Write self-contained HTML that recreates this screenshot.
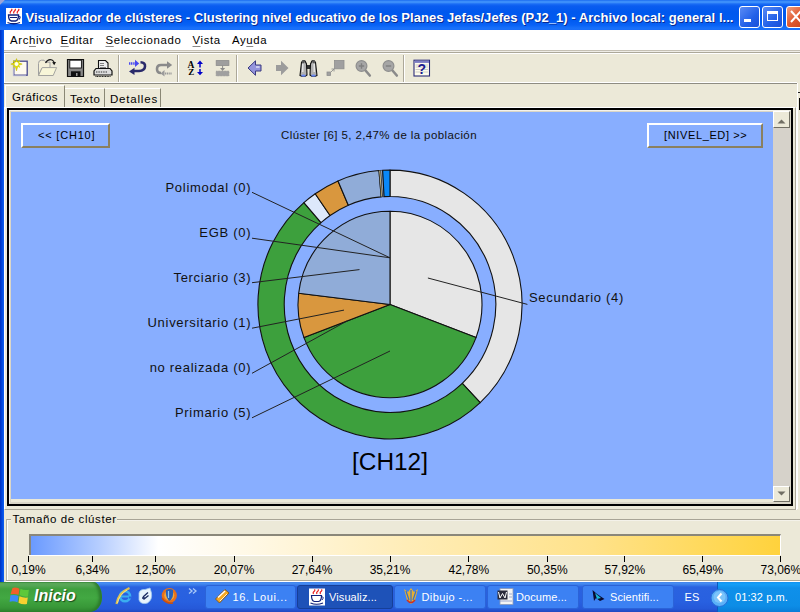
<!DOCTYPE html>
<html><head><meta charset="utf-8"><style>
*{margin:0;padding:0;box-sizing:border-box}
body{width:800px;height:612px;overflow:hidden;position:relative;background:#ECE9D8;font-family:"Liberation Sans",sans-serif;color:#000}
.a{position:absolute}
.t{position:absolute;white-space:nowrap;line-height:1}
#title{left:0;top:0;width:800px;height:30px;background:linear-gradient(#1060EC 0px,#3C8EFA 1px,#3C8EFA 2.5px,#1A6CF5 4px,#0A5CF0 6px,#0058EE 12px,#005AF0 20px,#0862F6 25px,#1870FA 28px,#1A6EF8 30px)}
#tl{left:0;top:0;width:6px;height:6px;background:linear-gradient(135deg,#9AA4D8 0,#9AA4D8 35%,transparent 45%)}
#lb{left:0;top:30px;width:4px;height:552px;background:linear-gradient(90deg,#0030C0,#0048E0 50%,#1060F0)}
#menu{left:4px;top:30px;width:796px;height:20px;background:#fff}
.mi{font-size:11.4px;top:35px;letter-spacing:0.62px}
.u{text-decoration:underline;text-decoration-color:#888;text-underline-offset:2px}
#sep1{left:4px;top:50px;width:796px;height:4px;background:linear-gradient(#C5C0B4 0,#C5C0B4 1px,#EFEDE6 1px,#EFEDE6 2px,#ACA899 2px,#ACA899 3px,#fff 3px)}
#tb{left:4px;top:54px;width:793px;height:29px;background:#ECE9D8;border-left:1px solid #fff}
#tbb{left:4px;top:82px;width:793px;height:2px;background:linear-gradient(#fff 0,#fff 1px,#8E8C82 1px)}
.vs{top:55px;width:2px;height:27px;background:linear-gradient(90deg,#ACA899 0,#ACA899 1px,#fff 1px)}
.tab{top:86px;height:22px;background:#ECE9D8;border-top:1px solid #fff;border-left:1px solid #fff;border-right:1px solid #8A8775}
.tabt{font-size:11.5px;letter-spacing:0.4px}
#panel{left:4px;top:107px;width:792px;height:403px}
#blk{left:7px;top:108px;width:786px;height:398px;border:2px solid #000}
#chart{left:11px;top:112px;width:762px;height:387px;background:#88AEFF}
#sb{left:773px;top:111px;width:17px;height:391px;background:#D6D2CA}
.sbtn{left:773px;width:17px;height:16px;background:#ECE9D8;border-top:1px solid #fff;border-left:1px solid #fff;border-right:1px solid #716F64;border-bottom:1px solid #716F64}
.btn{top:123px;height:25px;border-top:2px solid #fff;border-left:2px solid #fff;border-right:2px solid #8A8060;border-bottom:2px solid #8A8060}
.lab{font-size:13px;letter-spacing:0.7px;color:#111;text-align:right;width:120px}
#tz{left:6px;top:519px;width:794px;height:62px;border-top:1px solid #A8A496;border-left:1px solid #B8B4A6}
#bar{left:29px;top:534px;width:752px;height:21px;border-top:2px solid #8A877A;border-left:2px solid #8A877A;border-right:1px solid #fff;background:linear-gradient(90deg,#6A9AFF 0%,#B5CDFF 9%,#FFFFFF 17%,#FFF8E4 30%,#FFEDB8 50%,#FFE28A 75%,#FFD64C 95%,#FFD23C 100%)}
.tick{top:556px;width:1px;height:6px;background:#000}
.tl{font-size:12px;top:563.5px}
#task{left:0;top:582px;width:800px;height:30px;background:linear-gradient(#3C7CE8 0,#4A90F2 1px,#3A7CEA 3px,#2A62E0 5px,#2860E0 20px,#2558D8 27px,#1E48C0 30px)}
#start{left:0;top:582px;width:102px;height:30px;border-radius:0 9px 12px 0 / 0 15px 15px 0;background:linear-gradient(#3A8A3A 0,#62B062 1px,#58A858 3px,#3EA03E 7px,#42A842 16px,#389838 25px,#2E842E 30px);box-shadow:inset -3px 0 3px #2C7A2C}
.task{top:585px;height:24px;border-radius:3px;background:#3C81F3;border:1px solid #2B63D8}
.tt{font-size:11px;color:#fff;top:592px;letter-spacing:0.1px}
#tray{left:717px;top:582px;width:83px;height:30px;background:linear-gradient(#1190F0 0,#14A0F8 2px,#0F90EA 6px,#0D8DE6 24px,#0A7DD8 30px);border-left:1px solid #0A5AC0}
</style></head><body>
<div id="title" class="a"></div>
<div id="tl" class="a"></div>
<!-- java icon -->
<div class="a" style="left:6px;top:8px;width:16px;height:16px;background:#fff"></div>
<svg class="a" style="left:6px;top:8px" width="16" height="17" viewBox="0 0 16 17">
<path d="M4.5 5.5 Q3.5 4 5 3 Q6.5 2 5.5 0.8 M8 5.5 Q7 4 8.5 3 Q10 2 9 0.8 M11.5 5.5 Q10.5 4 12 3 Q13.5 2 12.5 0.8" stroke="#E81818" stroke-width="1.2" fill="none"/>
<path d="M2.5 7 H12.5 Q12.5 12.5 9.5 13 H5.5 Q2.5 12.5 2.5 7 Z" stroke="#10207A" stroke-width="1.3" fill="none"/>
<path d="M4 9.5 H11" stroke="#10207A" stroke-width="1"/>
<path d="M12.5 8 Q15.5 8.5 13 11.5" stroke="#10207A" stroke-width="1.1" fill="none"/>
<path d="M1.5 14.5 Q7.5 17 14 14.5" stroke="#10207A" stroke-width="1.3" fill="none"/>
</svg>
<div class="t" style="left:25.5px;top:11px;font-size:13px;font-weight:bold;letter-spacing:0.03px;color:#fff;text-shadow:1px 1px 0 #0A2A90">Visualizador de clústeres - Clustering nivel educativo de los Planes Jefas/Jefes (PJ2_1) - Archivo local: general l...</div>
<!-- title buttons -->
<div class="a" style="left:739px;top:6px;width:21px;height:22px;border:1px solid #fff;border-radius:3px;background:linear-gradient(135deg,#5A8BF5,#2260E8 60%,#1A50D8)"></div>
<div class="a" style="left:744px;top:19px;width:7px;height:3px;background:#fff"></div>
<div class="a" style="left:762px;top:6px;width:21px;height:22px;border:1px solid #fff;border-radius:3px;background:linear-gradient(135deg,#5A8BF5,#2260E8 60%,#1A50D8)"></div>
<div class="a" style="left:767px;top:11px;width:11px;height:10px;border:1px solid #fff;border-top-width:3px"></div>
<div class="a" style="left:786px;top:6px;width:21px;height:22px;border:1px solid #fff;border-radius:3px;background:linear-gradient(135deg,#F0A080,#E05A30 50%,#C84018)"></div>
<svg class="a" style="left:790px;top:10px" width="12" height="14"><path d="M1 1 L11 12 M11 1 L1 12" stroke="#fff" stroke-width="2"/></svg>

<div id="lb" class="a"></div>
<div id="menu" class="a"></div>
<div class="t mi" style="left:10px">Arc<span class="u">h</span>ivo</div>
<div class="t mi" style="left:60.5px"><span class="u">E</span>ditar</div>
<div class="t mi" style="left:105.5px"><span class="u">S</span>eleccionado</div>
<div class="t mi" style="left:192.5px"><span class="u">V</span>ista</div>
<div class="t mi" style="left:232px">Ay<span class="u">u</span>da</div>
<div id="sep1" class="a"></div>
<div id="tb" class="a"></div>
<div id="tbb" class="a"></div>
<div class="a vs" style="left:118px"></div>
<div class="a vs" style="left:177px"></div>
<div class="a vs" style="left:236px"></div>
<div class="a vs" style="left:403px"></div>
<svg class="a" style="left:0;top:0" width="440" height="84" viewBox="0 0 440 84">
<!-- new -->
<rect x="13.8" y="61.2" width="13.4" height="14" fill="#FFFAEE" stroke="#48488E" stroke-width="1.3"/>
<path d="M13.3 63 V75.8 H26" stroke="#C8C8E0" stroke-width="0.9" fill="none"/>
<path d="M16.5 58.6 L18 62.6 L22.2 64.1 L18 65.6 L16.5 70.8 L15 65.6 L10.8 64.1 L15 62.6 Z" fill="#E4E000" stroke="#B8B000" stroke-width="0.5"/>
<path d="M13.2 60.8 L19.8 67.4 M19.8 60.8 L13.2 67.4" stroke="#D8D800" stroke-width="1.3"/>
<circle cx="16.5" cy="64.1" r="2" fill="#FFFFF4"/>
<!-- open -->
<path d="M38.5 63.5 Q38.5 60.2 41.5 60.2 H44 L46 62.2 H50 V68 H42 L38.5 75.5 Z" fill="#F4F0D8" stroke="#A0A0A0" stroke-width="1"/>
<path d="M38.5 75.5 L42.2 67.6 H56.6 L53.2 75.5 Z" fill="#F8F6D8" stroke="#A4A4A0" stroke-width="1"/>
<path d="M45.5 63 Q48 58.6 52 60 Q54 61 54.2 63" stroke="#1A1A1A" stroke-width="1.2" fill="none"/>
<path d="M52.2 62.2 L56 62 L54.2 65.2 Z" fill="#111"/>
<!-- save -->
<path d="M67.5 59.5 H83.5 V76.5 H67.5 Z" fill="#888" stroke="#111" stroke-width="1.2"/>
<rect x="69.8" y="60.2" width="11.6" height="7.8" fill="#fff" stroke="#111" stroke-width="0.9"/>
<rect x="71" y="71.3" width="9.5" height="5" fill="#111"/>
<rect x="76" y="73" width="1.5" height="3" fill="#999"/>
<!-- print -->
<path d="M98.5 60.5 H105.5 L108 63 V69 H98.5 Z" fill="#eee" stroke="#111" stroke-width="1.1"/>
<path d="M100 63.5 H104 M100 65.5 H104 M100 67.5 H106" stroke="#666" stroke-width="0.8"/>
<path d="M96 68.5 H110 L112 71 V75 H94 V71 Z" fill="#ddd" stroke="#111" stroke-width="1.2"/>
<path d="M96 72 H108" stroke="#333" stroke-width="1.2" stroke-dasharray="1.4 1"/>
<path d="M95.5 76.5 H110.5" stroke="#111" stroke-width="1" stroke-dasharray="1 0.6"/>
<!-- redo blue -->
<path d="M140.5 62.3 Q145.5 62.5 145 66.5 Q144.8 70.5 139 71 H134" stroke="#2A2A6A" stroke-width="2.6" fill="none"/>
<path d="M129 71.5 L134.5 67.8 V75 Z" fill="#2A2A6A"/>
<path d="M129 63.5 H135.5" stroke="#4848F0" stroke-width="2.4" stroke-dasharray="1.2 0.6"/>
<path d="M135 59.8 L139.2 63.5 L135 67 Z" fill="#4848F0"/>
<!-- gray -->
<path d="M168 65 H161 Q157 65 157 69 Q157 73 161 73" stroke="#8A8A8A" stroke-width="2.6" fill="none"/>
<path d="M172.2 65 L167 61.2 V68.8 Z" fill="#8A8A8A"/>
<path d="M165 73.5 H172" stroke="#9A9A9A" stroke-width="2.2" stroke-dasharray="1.2 0.6"/>
<path d="M164.5 70 L160.5 73.5 L164.5 76.5 Z" fill="#9A9A9A"/>
<!-- AZ -->
<text x="187.5" y="67.6" font-family="Liberation Serif" font-weight="bold" font-size="9.5" fill="#000">A</text>
<text x="188.2" y="75" font-family="Liberation Serif" font-weight="bold" font-size="9" fill="#000">Z</text>
<path d="M200 62.5 V67.5 M200 69 V73" stroke="#0000C8" stroke-width="1.5"/>
<path d="M197 64 L200 60.5 L203 64 Z M197 72 L200 75.2 L203 72 Z" fill="#0000C8"/>
<!-- gray insert -->
<rect x="216.2" y="60.6" width="12.7" height="4.8" fill="#9E9E9E" stroke="#8A8A8A" stroke-width="0.8"/>
<path d="M222.6 65.5 V69" stroke="#8A8A8A" stroke-width="1"/>
<path d="M220 68 L222.6 71 L225.2 68 Z" fill="#8A8A8A"/>
<rect x="216.2" y="71.2" width="12.7" height="4.6" fill="#A0A0A0" stroke="#909090" stroke-width="0.8" stroke-dasharray="1 0.5"/>
<!-- back -->
<path d="M248 68 L255.5 60.8 V65 H261 V71 H255.5 V75.3 Z" fill="#9494DC" stroke="#3A3A80" stroke-width="1"/>
<path d="M256 67 H259.5" stroke="#fff" stroke-width="1"/>
<!-- forward -->
<path d="M288.5 68 L281 60.8 V65 H276 V71 H281 V75.3 Z" fill="#9C9C9C"/>
<!-- binoculars -->
<path d="M306 65 H311 V69 H306 Z" fill="#333"/>
<path d="M301.5 62.5 Q303 59.8 305 61 L306.5 64 L307 75 Q304 77.5 300 75.5 Z" fill="#B0B0B0" stroke="#111" stroke-width="1.1"/>
<path d="M315.5 62.5 Q314 59.8 312 61 L310.5 64 L310 75 Q313 77.5 317 75.5 Z" fill="#B0B0B0" stroke="#111" stroke-width="1.1"/>
<path d="M302.8 64 V72 M314.2 64 V72" stroke="#F0F0F0" stroke-width="1.2"/>
<circle cx="303.3" cy="61.6" r="1.6" fill="#555"/><circle cx="313.7" cy="61.6" r="1.6" fill="#555"/>
<ellipse cx="303.5" cy="75.6" rx="2.3" ry="1.2" fill="#6A88F0"/>
<ellipse cx="313.5" cy="75.6" rx="2.3" ry="1.2" fill="#6A88F0"/>
<!-- resize -->
<rect x="334.5" y="60.5" width="9.5" height="8.3" fill="#A0A0A0" stroke="#8E8E8E" stroke-width="0.8"/>
<rect x="327" y="72" width="3.5" height="3.5" fill="#A0A0A0" stroke="#8E8E8E" stroke-width="0.8"/>
<path d="M331 72 L334 69 M331.5 69 H334 V71.5" stroke="#8E8E8E" stroke-width="0.9" fill="none"/>
<!-- zoom in -->
<path d="M365.5 70.5 L369.8 75.5" stroke="#8A8A8A" stroke-width="2.6" stroke-linecap="round"/>
<circle cx="361.5" cy="66" r="5.4" fill="#A6A6A6" stroke="#8E8E8E" stroke-width="1.2"/>
<path d="M358.8 66 H364.2 M361.5 63.3 V68.7" stroke="#808080" stroke-width="1.4"/>
<!-- zoom out -->
<path d="M392.5 70.5 L396.8 75.5" stroke="#8A8A8A" stroke-width="2.6" stroke-linecap="round"/>
<circle cx="388.5" cy="66" r="5.4" fill="#A6A6A6" stroke="#8E8E8E" stroke-width="1.2"/>
<path d="M385.8 66 H391.2" stroke="#808080" stroke-width="1.4"/>
<!-- help -->
<rect x="414" y="60.2" width="15.5" height="15.8" fill="#FFFCEC" stroke="#2A2A78" stroke-width="1.1"/>
<rect x="414.5" y="60.7" width="14.5" height="2.2" fill="#7C7CC4"/>
<path d="M415.5 65 H428 M415.5 67 H428 M415.5 69.5 H428 M415.5 72 H428" stroke="#C0C0C0" stroke-width="0.8"/>
<text x="421.8" y="74.2" text-anchor="middle" font-family="Liberation Sans" font-weight="bold" font-size="14" fill="#1A1A90">?</text>
</svg>


<!-- tabs -->
<div class="a tab" style="left:104px;top:88px;width:57px;height:20px"></div>
<div class="a tab" style="left:64px;top:88px;width:41px;height:20px"></div>
<div class="a tab" style="left:5px;top:85px;width:60px;height:24px"></div>
<div class="t tabt" style="left:12px;top:91.5px">Gráficos</div>
<div class="t tabt" style="left:70px;top:94px;letter-spacing:0.6px">Texto</div>
<div class="t tabt" style="left:110px;top:94px;letter-spacing:0.8px">Detalles</div>

<div id="panel" class="a" style="border-top:1px solid #fff;border-left:1px solid #fff;border-right:1px solid #ACA899;border-bottom:1px solid #ACA899;box-shadow:1px 0 0 #fff"></div>
<div id="blk" class="a"></div>
<div class="a" style="left:797px;top:83px;width:1px;height:426px;background:#fff"></div>
<div class="a" style="left:798px;top:92px;width:2px;height:1px;background:#222"></div>
<div class="a" style="left:798.5px;top:98px;width:1.5px;height:12px;background:#000"></div>
<div class="a" style="left:9px;top:110px;width:782px;height:394px;border:1px solid #F4F2EA;border-bottom-color:#D8D4C6;border-right-color:#D8D4C6"></div>
<div class="a" style="left:10px;top:111px;width:780px;height:392px;border:1px solid #DAD6C8"></div>
<div id="chart" class="a"></div>
<div id="sb" class="a"></div>
<div class="a sbtn" style="top:111px;height:17px"></div>
<svg class="a" style="left:777px;top:118.5px" width="9" height="5"><path d="M0.5 4.5 L4.5 0.5 L8.5 4.5 Z" fill="#716F64"/></svg>
<div class="a sbtn" style="top:486px"></div>
<svg class="a" style="left:777px;top:491px" width="9" height="5"><path d="M0.5 0.5 L4.5 4.5 L8.5 0.5 Z" fill="#716F64"/></svg>

<!-- chart buttons -->
<div class="a btn" style="left:21px;width:89px"></div>
<div class="t" style="left:38px;top:130px;font-size:11px;letter-spacing:0.8px">&lt;&lt; [CH10]</div>
<div class="a btn" style="left:647px;width:116px"></div>
<div class="t" style="left:664px;top:130px;font-size:11px;letter-spacing:0.63px">[NIVEL_ED] &gt;&gt;</div>
<div class="t" style="left:281px;top:130px;font-size:11.5px;letter-spacing:0.4px;color:#111">Clúster [6] 5, 2,47% de la población</div>

<svg class="a" style="left:0;top:0" width="800" height="612" viewBox="0 0 800 612">
<g stroke="#111" stroke-width="1.1" stroke-linejoin="round">
<path fill="#E6E6E6" d="M390.00,170.10 A132.00,134.40 0 0 1 480.19,402.63 L462.29,383.36 A105.80,108.00 0 0 0 390.00,196.50 Z"/>
<path fill="#3DA03D" d="M480.19,402.63 A132.00,134.40 0 1 1 303.92,202.61 L321.01,222.62 A105.80,108.00 0 1 0 462.29,383.36 Z"/>
<path fill="#DDE8FB" d="M303.92,202.61 A132.00,134.40 0 0 1 315.23,193.74 L330.07,215.49 A105.80,108.00 0 0 0 321.01,222.62 Z"/>
<path fill="#D9973E" d="M315.23,193.74 A132.00,134.40 0 0 1 338.00,180.97 L348.32,205.23 A105.80,108.00 0 0 0 330.07,215.49 Z"/>
<path fill="#90ACD8" d="M338.00,180.97 A132.00,134.40 0 0 1 378.95,170.57 L381.15,196.88 A105.80,108.00 0 0 0 348.32,205.23 Z"/>
<path fill="#E8D9A0" stroke-width="0.6" d="M378.95,170.57 A132.00,134.40 0 0 1 380.79,170.43 L382.62,196.76 A105.80,108.00 0 0 0 381.15,196.88 Z"/>
<path fill="#B8C8E8" stroke-width="0.6" d="M380.79,170.43 A132.00,134.40 0 0 1 382.63,170.31 L384.09,196.67 A105.80,108.00 0 0 0 382.62,196.76 Z"/>
<path fill="#0A88F8" d="M382.63,170.31 A132.00,134.40 0 0 1 390.00,170.10 L390.00,196.50 A105.80,108.00 0 0 0 384.09,196.67 Z"/>
<path fill="#E6E6E6" d="M390.00,304.50 L390.00,211.20 A92.00,93.30 0 0 1 476.02,337.58 Z"/>
<path fill="#3DA03D" d="M390.00,304.50 L476.02,337.58 A92.00,93.30 0 0 1 303.98,337.58 Z"/>
<path fill="#D9973E" d="M390.00,304.50 L303.98,337.58 A92.00,93.30 0 0 1 298.67,293.25 Z"/>
<path fill="#90ACD8" d="M390.00,304.50 L298.67,293.25 A92.00,93.30 0 0 1 390.00,211.20 Z"/>
</g>
<g stroke="#222" stroke-width="1" fill="none">
<path d="M252,192.3 L390,257.8"/>
<path d="M252,238.2 L390,257.8"/>
<path d="M252,282.7 L359.5,269.6"/>
<path d="M252,328.2 L344,310.1"/>
<path d="M252,373.3 L347,321"/>
<path d="M252,417.8 L390,351"/>
<path d="M427.9,278 L527.4,304.4"/>
</g>
</svg>
<div class="t lab" style="left:131.2px;top:181px">Polimodal (0)</div>
<div class="t lab" style="left:131.2px;top:226px">EGB (0)</div>
<div class="t lab" style="left:131.2px;top:271px">Terciario (3)</div>
<div class="t lab" style="left:131.2px;top:316px">Universitario (1)</div>
<div class="t lab" style="left:131.2px;top:361px">no realizada (0)</div>
<div class="t lab" style="left:131.2px;top:406px">Primario (5)</div>
<div class="t lab" style="left:529px;top:291px;text-align:left">Secundario (4)</div>
<div class="t" style="left:352px;top:450px;font-size:24.4px">[CH12]</div>

<!-- bottom panel -->

<div id="tz" class="a"></div>
<div class="a" style="left:6px;top:580px;width:794px;height:2px;background:linear-gradient(#ACA899 0,#ACA899 1px,#fff 1px)"></div>
<div class="a" style="left:7px;top:520px;width:793px;height:60px;border-top:1px solid #F4F2EA;border-left:1px solid #fff"></div>
<div class="t" style="left:11px;top:514px;font-size:11.5px;letter-spacing:0.6px;background:#ECE9D8;padding:0 0.5px 0 1.5px">Tamaño de clúster</div>
<div id="bar" class="a"></div>
<div class="a" style="left:29px;top:555px;width:751px;height:1px;background:#fff"></div>
<div class="a tick" style="left:28px"></div>
<div class="t tl" style="left:11.6px">0,19%</div>
<div class="a tick" style="left:92px"></div>
<div class="t tl" style="left:75.4px">6,34%</div>
<div class="a tick" style="left:155px"></div>
<div class="t tl" style="left:135.1px">12,50%</div>
<div class="a tick" style="left:234px"></div>
<div class="t tl" style="left:213.7px">20,07%</div>
<div class="a tick" style="left:312px"></div>
<div class="t tl" style="left:291.7px">27,64%</div>
<div class="a tick" style="left:390px"></div>
<div class="t tl" style="left:369.7px">35,21%</div>
<div class="a tick" style="left:468px"></div>
<div class="t tl" style="left:448.5px">42,78%</div>
<div class="a tick" style="left:547px"></div>
<div class="t tl" style="left:526.9px">50,35%</div>
<div class="a tick" style="left:624px"></div>
<div class="t tl" style="left:604.5px">57,92%</div>
<div class="a tick" style="left:702px"></div>
<div class="t tl" style="left:682.5px">65,49%</div>
<div class="a tick" style="left:780px"></div>
<div class="t tl" style="left:760.5px">73,06%</div>

<!-- taskbar -->
<div id="task" class="a"></div>
<div id="start" class="a"></div>
<div class="t" style="left:34px;top:588px;font-size:16px;font-weight:bold;font-style:italic;color:#fff;text-shadow:1px 1px 1px #1A4A1A">Inicio</div>
<div class="a task" style="left:205px;width:91px"></div>
<div class="a task" style="left:297px;width:96px;background:#1E52B8;border-color:#163F98"></div>
<div class="a task" style="left:394px;width:92px"></div>
<div class="a task" style="left:487px;width:92px"></div>
<div class="a task" style="left:582px;width:92px"></div>
<div class="t tt" style="left:232.5px;letter-spacing:0.62px">16. Loui...</div>
<div class="t tt" style="left:329px">Visualiz...</div>
<div class="t tt" style="left:421.5px;letter-spacing:0.4px">Dibujo -...</div>
<div class="t tt" style="left:516px">Docume...</div>
<div class="t tt" style="left:610px">Scientifi...</div>
<div class="t tt" style="left:684.5px">ES</div>
<div id="tray" class="a"></div>
<div class="t tt" style="left:735px">01:32 p.m.</div>
<svg class="a" style="left:0;top:582px" width="800" height="30" viewBox="0 582 800 30">
<!-- windows logo -->
<g transform="translate(10.5,587.5) rotate(8 9 8)">
<path d="M1 1.5 Q4 0 8 1.2 V7.5 Q4.5 6.5 0 8 Z" fill="#F0602A"/>
<path d="M9 1.3 Q13 2.5 17.5 1 V7.8 Q13.5 9 9 7.6 Z" fill="#5EC83A"/>
<path d="M0 9 Q4.5 7.6 8 8.6 V15 Q4 14 0 15.5 Z" fill="#3A8AF8"/>
<path d="M9 8.7 Q13.5 10 17.5 8.8 V15.5 Q13 17 9 15.2 Z" fill="#F8D030"/>
</g>
<!-- IE -->
<circle cx="125" cy="596.3" r="5" fill="none" stroke="#3AAEF0" stroke-width="2.6"/>
<path d="M120.5 596.5 H129.5" stroke="#3AAEF0" stroke-width="2"/>
<path d="M129 597.5 H131" stroke="#2468E0" stroke-width="2"/>
<path d="M116.5 604 Q118 593 129.5 588" stroke="#E0C050" stroke-width="2.2" fill="none"/>
<path d="M117.5 603 Q119 595 127 590" stroke="#F8F0A0" stroke-width="0.8" fill="none"/>
<!-- 2nd -->
<path d="M139 593 Q140 589 145 589.5 L150 588 L151.5 593 Q152.5 600 147.5 603 Q141 605 139 600 Z" fill="#E8F4FC" stroke="#9EC8F0" stroke-width="0.8"/>
<path d="M143 597 L148 592.5 M143.5 599.5 L148.5 595.5 M142 598 H145" stroke="#1A2A60" stroke-width="1.3"/>
<!-- firefox -->
<circle cx="169.3" cy="595.5" r="7.6" fill="#E8701A"/>
<circle cx="169.3" cy="595.5" r="5" fill="#F4A838"/>
<path d="M166 590 Q165 596 169 601 Q174 599 173 590 Q170 588 166 590 Z" fill="#2860B8"/>
<path d="M168.5 591 V598" stroke="#8AC8F8" stroke-width="1.2"/>
<path d="M162 598 Q166 604 173 603" stroke="#C85010" stroke-width="1.5" fill="none"/>
<path d="M189 588.5 L192 591 L189 593.5 M193 588.5 L196 591 L193 593.5" stroke="#A8C8F8" stroke-width="1.3" fill="none"/>
<!-- winamp-like -->
<path d="M215.5 599 L225 589.5 L229 593 L219.5 603 Z" fill="#F6A820" stroke="#7A4A10" stroke-width="0.8"/>
<path d="M218 597.5 L225 591" stroke="#fff" stroke-width="1.4"/>
<path d="M220 601 L227 594" stroke="#FFF2D0" stroke-width="1"/>
<!-- java -->
<rect x="309" y="588.5" width="16" height="17" fill="#fff"/>
<path d="M313.5 594 Q312.5 592.5 314 591.5 Q315.5 590.5 314.5 589.3 M317 594 Q316 592.5 317.5 591.5 Q319 590.5 318 589.3 M320.5 594 Q319.5 592.5 321 591.5 Q322.5 590.5 321.5 589.3" stroke="#E81818" stroke-width="1.1" fill="none"/>
<path d="M311.5 595.5 H321.5 Q321.5 601 318.5 601.5 H314.5 Q311.5 601 311.5 595.5 Z" stroke="#10207A" stroke-width="1.2" fill="none"/>
<path d="M321.5 596.5 Q324.5 597 322 600" stroke="#10207A" stroke-width="1" fill="none"/>
<path d="M310.5 603 Q316.5 605.5 323 603" stroke="#10207A" stroke-width="1.2" fill="none"/>
<!-- dibujo -->
<path d="M404 589 L407 600 L411 604 L415 600 L418 589 L414 592 L411 588 L408 592 Z" fill="#E8B030"/>
<path d="M406 591 L409 600 M411 590 V602 M416 591 L413 600" stroke="#3070D0" stroke-width="1.2"/>
<path d="M407 600 Q411 605 415 600" stroke="#D03020" stroke-width="1.5" fill="none"/>
<!-- word -->
<rect x="500" y="588.5" width="13" height="16" fill="#F4F4F4" stroke="#8898B8" stroke-width="0.8"/>
<rect x="497.5" y="590.5" width="10" height="9" fill="#2A2A3A"/>
<path d="M498.5 592 L500 598 L502.5 593.5 L505 598 L506.5 592" stroke="#fff" stroke-width="1" fill="none"/>
<path d="M509 594 H512 M509 597 H512 M500 601 H512" stroke="#8898C8" stroke-width="0.8"/>
<!-- scientific -->
<path d="M592.5 590 L597 594 L604.5 599 L600 601 L596 598 L594 601 Z" fill="#0A0A30"/>
<path d="M595 593 L601 598 L597 599 Z" fill="#18B8D8"/>
<!-- tray arrow -->
<circle cx="719.5" cy="598" r="8.5" fill="#5AB0F8" stroke="#2870D8" stroke-width="1"/>
<circle cx="719.5" cy="597" r="6" fill="#7CC4FA"/>
<path d="M721.5 593.5 L718 597.5 L721.5 601.5" stroke="#fff" stroke-width="2" fill="none"/>
</svg>

</body></html>
